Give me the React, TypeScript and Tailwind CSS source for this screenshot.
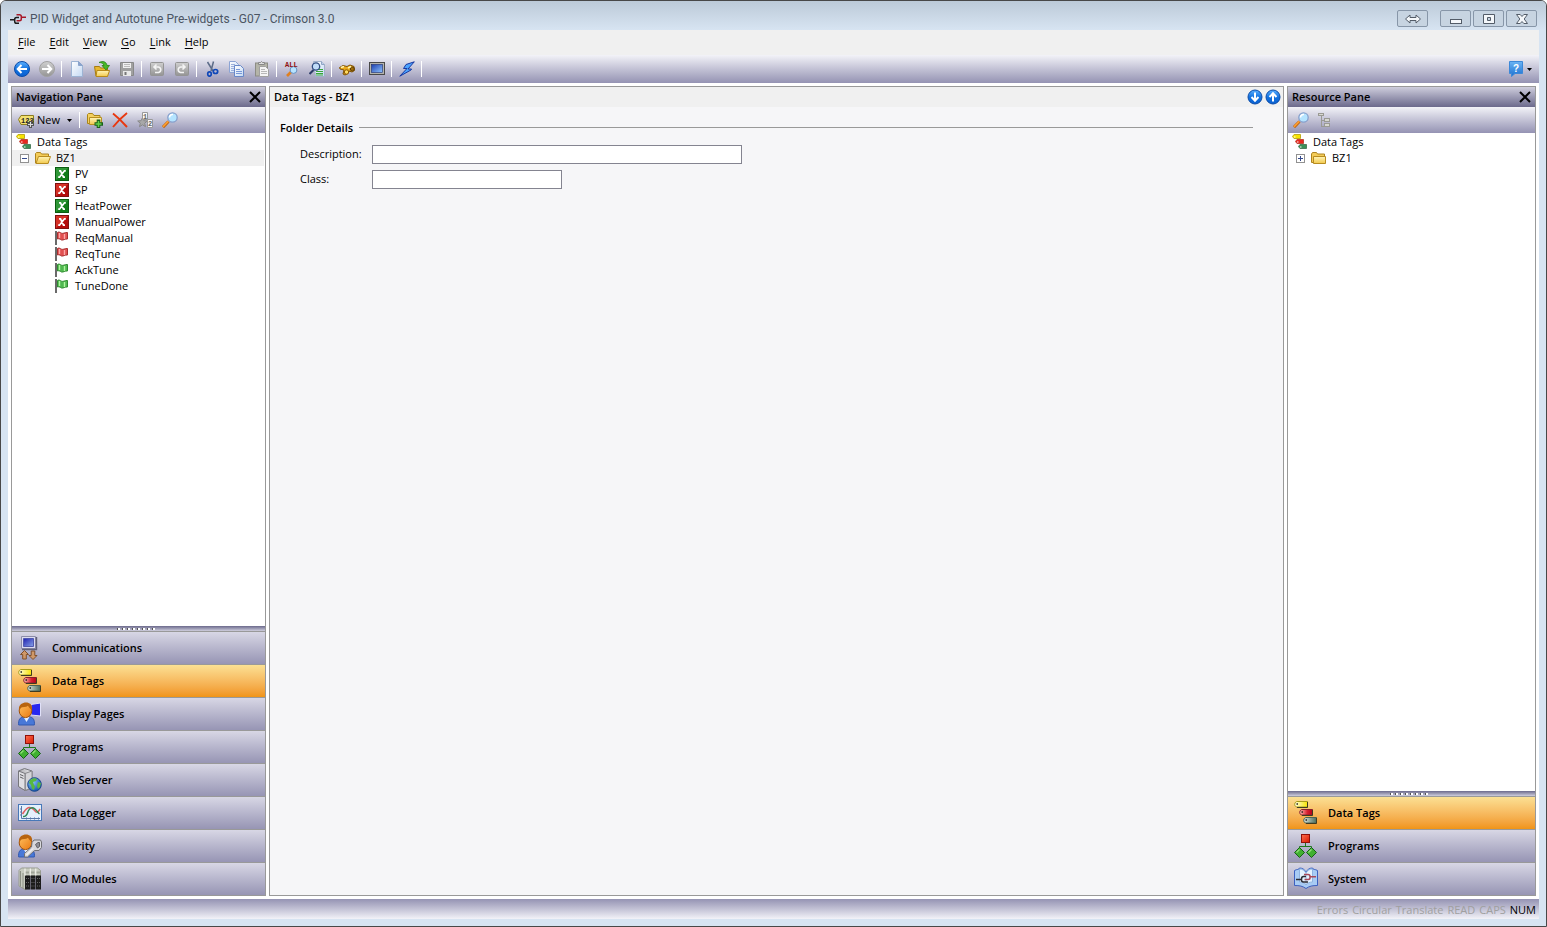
import React from "react";

type IconProps = { name: string; size?: number };

const SharedDefs = () => (
  <svg width="0" height="0" className="absolute" aria-hidden="true">
    <defs>
      <linearGradient id="gBlue" x1="0" y1="0" x2="0" y2="1">
        <stop offset="0" stopColor="#5cb0ff" />
        <stop offset="0.5" stopColor="#1272e0" />
        <stop offset="1" stopColor="#0a60d0" />
      </linearGradient>
      <linearGradient id="gHelp" x1="0" y1="0" x2="0" y2="1">
        <stop offset="0" stopColor="#6cb4f4" />
        <stop offset="1" stopColor="#1c70d0" />
      </linearGradient>
      <linearGradient id="gGray" x1="0" y1="0" x2="0" y2="1">
        <stop offset="0" stopColor="#d0d0d0" />
        <stop offset="1" stopColor="#949494" />
      </linearGradient>
      <linearGradient id="gFolder" x1="0" y1="0" x2="0" y2="1">
        <stop offset="0" stopColor="#fff4b8" />
        <stop offset="1" stopColor="#f2c94c" />
      </linearGradient>
      <linearGradient id="gPage" x1="0" y1="0" x2="1" y2="1">
        <stop offset="0" stopColor="#ffffff" />
        <stop offset="1" stopColor="#c3d9f3" />
      </linearGradient>
      <linearGradient id="gScreen" x1="0" y1="0" x2="1" y2="1">
        <stop offset="0" stopColor="#1c3fae" />
        <stop offset="1" stopColor="#8fc4ff" />
      </linearGradient>
      <linearGradient id="gMonitor" x1="0" y1="0" x2="1" y2="1">
        <stop offset="0" stopColor="#2020b0" />
        <stop offset="1" stopColor="#88a4e8" />
      </linearGradient>
      <linearGradient id="gYellowTag" x1="0" y1="0" x2="1" y2="0">
        <stop offset="0" stopColor="#fffde0" />
        <stop offset="1" stopColor="#f8e400" />
      </linearGradient>
      <linearGradient id="gRedTag" x1="0" y1="0" x2="1" y2="0">
        <stop offset="0" stopColor="#ffc0b4" />
        <stop offset="0.6" stopColor="#d82030" />
        <stop offset="1" stopColor="#b00018" />
      </linearGradient>
      <linearGradient id="gGreenTag" x1="0" y1="0" x2="1" y2="0">
        <stop offset="0" stopColor="#d8e4dc" />
        <stop offset="1" stopColor="#4c6c58" />
      </linearGradient>
      <linearGradient id="gRedSquare" x1="0" y1="0" x2="1" y2="1">
        <stop offset="0" stopColor="#ff7050" />
        <stop offset="1" stopColor="#d81800" />
      </linearGradient>
      <linearGradient id="gTower" x1="0" y1="0" x2="1" y2="0">
        <stop offset="0" stopColor="#a8a8ac" />
        <stop offset="1" stopColor="#ececf0" />
      </linearGradient>
      <linearGradient id="gSkin" x1="0" y1="0" x2="1" y2="1">
        <stop offset="0" stopColor="#ffc060" />
        <stop offset="1" stopColor="#e87810" />
      </linearGradient>
      <radialGradient id="gGlobe" cx="0.35" cy="0.3" r="0.8">
        <stop offset="0" stopColor="#8cc8ff" />
        <stop offset="1" stopColor="#0848a8" />
      </radialGradient>
    </defs>
  </svg>
);

const lens = (
  <>
    <path d="M1 15.200 6.500 9.500" stroke="#c06818" strokeWidth="3" />
    <path d="M1 14.800 6.300 9.300" stroke="#ffa030" strokeWidth="1.600" />
    <circle cx="10.500" cy="5.500" r="4.700" fill="#b4e4ff" stroke="#88a0cc" strokeWidth="1.300" />
    <path d="M7.500 5.500A3 3 0 0 1 11 2.500" stroke="#fff" strokeWidth="1.600" fill="none" />
  </>
);

const user = (
  <>
    <path d="M.7 23c-.7-5 1.500-8 4.800-8h6c3.500 0 5.500 3 4.800 8z" fill="#4878d8" stroke="#3058b0" />
    <path d="M5.500 15l3 5 3-5z" fill="#e8f0ff" />
    <ellipse cx="7.500" cy="8.800" rx="6.300" ry="6.800" fill="url(#gSkin)" stroke="#a05008" />
    <path d="M1.200 9C-.2 3.500 4 .6 8 .6c4.500 0 7 3.400 5.800 7.400C12 7 11 5.500 10 3.800 8 5.500 4.500 5 3 5.800 2.200 6.500 2 8 1.200 9z" fill="#b86410" />
  </>
);

const xTag = (light: string, fill: string, border: string) => (
  <>
    <rect x="1.500" y="1.500" width="13" height="13" fill={fill} stroke={border} />
    <path d="M2 2h12L2 14z" fill={light} opacity=".45" />
    <path d="M5 4.800h1.500l3 6.400H11M11.800 4.800h-1.300L5.500 11.200H4.200" stroke="#fff" strokeWidth="1.700" fill="none" />
  </>
);

const flag = (fill: string, light: string, edge: string) => (
  <>
    <path d="M2 1v14" stroke="#444" strokeWidth="1.600" />
    <path d="M3.500 2.500C5 1.500 6 2.500 7.500 3.200c2 .8 3-1 6-.7v6.500c-3-.3-4 1.500-6 1C6 9.300 5 8.300 3.500 9z" fill={fill} stroke={edge} />
    <path d="M5.500 3v5M10.500 4v5" stroke={light} strokeWidth="1.400" />
  </>
);

const icons16: Record<string, React.ReactNode> = {
  app: (
    <g fill="none" strokeWidth="1.500">
      <path d="M0 8.700h4.500M9 6.500H6.500Q4.700 6.500 4.700 8.500v2q0 1.800 1.800 1.800H9" stroke="#1c1c1c" />
      <path d="M6.500 3.800h3q1.800 0 1.800 1.800v2.600q0 1.500-1.800 1.500H6.500M11.300 6.300H16" stroke="#a81828" />
    </g>
  ),
  back: (
    <>
      <circle cx="8" cy="8" r="7.500" fill="url(#gBlue)" stroke="#0c4ca8" />
      <path d="M13 8H4M7.500 4 3.700 8l3.800 4" stroke="#fff" strokeWidth="2" fill="none" />
    </>
  ),
  forward: (
    <>
      <circle cx="8" cy="8" r="7.500" fill="url(#gGray)" stroke="#a0a0a0" />
      <path d="M3 8h9M8.500 4l3.800 4-3.800 4" stroke="#fff" strokeWidth="2" fill="none" />
    </>
  ),
  down: (
    <>
      <circle cx="8" cy="8" r="7" fill="url(#gBlue)" stroke="#0c4ca8" />
      <path d="M8 3.500v8M4.500 8 8 11.700 11.500 8" stroke="#fff" strokeWidth="2" fill="none" />
    </>
  ),
  up: (
    <>
      <circle cx="8" cy="8" r="7" fill="url(#gBlue)" stroke="#0c4ca8" />
      <path d="M8 12.500v-8M4.500 8 8 4.300 11.500 8" stroke="#fff" strokeWidth="2" fill="none" />
    </>
  ),
  newFile: (
    <>
      <path d="M2.500.5h7l4 4v11h-11z" fill="url(#gPage)" stroke="#9db4d4" />
      <path d="M9.500.5v4h4z" fill="#8aa4cc" stroke="#8aa4cc" />
    </>
  ),
  open: (
    <>
      <path d="M.5 5.500h5l1 1.500h7v8H2z" fill="#e8b830" stroke="#a87c10" />
      <path d="M3 9.500h12.500l-2 6H2z" fill="url(#gFolder)" stroke="#b88a18" />
      <path d="M5 1.500C8.500-.5 12.500.5 13 4.500h2.500L12 9 8 4.500h2C9.500 2.500 7.500 1.500 5 1.500z" fill="#48b828" stroke="#1c7c10" strokeWidth="0.700" />
    </>
  ),
  save: (
    <>
      <path d="M1.500 1.500h13v13h-13z" fill="#a0a0a0" stroke="#888" />
      <path d="M4 2h8v5H4z" fill="#f0f0f0" />
      <path d="M4 10h8v5H4z" fill="#e8e8e8" />
      <path d="M5.500 11h2v3h-2z" fill="#777" />
      <path d="M5 3.500h6M5 5.500h6" stroke="#bbb" />
    </>
  ),
  undo: (
    <>
      <rect x="1.500" y="1.500" width="13" height="13" rx="1" fill="url(#gGray)" stroke="#959595" />
      <path d="M5 6h4.500a2.800 2.800 0 0 1 0 5.500H6M7.500 3.500 5 6l2.500 2.500" stroke="#f4f4f4" strokeWidth="1.600" fill="none" />
    </>
  ),
  redo: (
    <>
      <rect x="1.500" y="1.500" width="13" height="13" rx="1" fill="url(#gGray)" stroke="#959595" />
      <path d="M11 6H6.500a2.800 2.800 0 0 0 0 5.500H10M8.500 3.500 11 6 8.500 8.500" stroke="#f4f4f4" strokeWidth="1.600" fill="none" />
    </>
  ),
  cut: (
    <>
      <path d="M3.500 1 9 10M9.500.5 7 10" stroke="#5c6c88" strokeWidth="1.500" />
      <g fill="none" stroke="#1048b8" strokeWidth="1.700">
        <ellipse cx="5.500" cy="13" rx="1.800" ry="2.200" />
        <ellipse cx="11.500" cy="10.500" rx="2.200" ry="2" />
      </g>
    </>
  ),
  copy: (
    <>
      <path d="M.5.5h6l3 3v8h-9z" fill="url(#gPage)" stroke="#8ca4d4" />
      <path d="M2 3.500h4M2 5.500h4M2 7.500h3M2 9.500h3" stroke="#9cb0dc" />
      <path d="M5.500 4.500h6l3 3v8h-9z" fill="url(#gPage)" stroke="#6888c8" />
      <path d="M7 8.500h4M7 10.500h6M7 12.500h6" stroke="#7898d8" />
    </>
  ),
  paste: (
    <>
      <rect x="1.500" y="2" width="12" height="13" fill="#b4b4a8" stroke="#8c8c84" />
      <path d="M4.500 3.500v-2h2l1-1 1 1h2v2z" fill="#ddd" stroke="#888" />
      <path d="M5.500 5.500h6l3 3v7h-9z" fill="#f4f4f4" stroke="#a0a0a0" />
      <path d="M7 8.500h4M7 10.500h6M7 12.500h6" stroke="#b8b8b8" />
    </>
  ),
  findAll: (
    <>
      <path d="m3 15 4-4" stroke="#e08020" strokeWidth="2.600" />
      <circle cx="9.500" cy="9" r="3.400" fill="#b8e4ff" stroke="#6890c0" />
      <text x="1" y="6" fontSize="7" fontWeight="700" fill="#901010" fontFamily="Liberation Mono, monospace">ALL</text>
    </>
  ),
  findPage: (
    <>
      <path d="M4.500.5h8l3 3v12h-9z" fill="url(#gPage)" stroke="#a0b0c8" />
      <path d="M12.500.5v3h3" fill="#c0d0e8" stroke="#90a4c4" />
      <path d="M9 8.500h5M7 10.500h7M7 12.500h7M7 14h7" stroke="#38a838" />
      <path d="m.5 13 4-4" stroke="#2c3c68" strokeWidth="2.200" />
      <circle cx="7" cy="5.500" r="3.700" fill="#c0dcf8" stroke="#304c80" strokeWidth="1.300" />
    </>
  ),
  binoculars: (
    <>
      <path d="M.5 6.500 4 4.500l4 1 3-1.500 4 1.500.5 4-2.500 1.500-3-1-1 2.500-3 1.500-2-1L5 9 1 8z" fill="#e8a818" stroke="#80540a" />
      <circle cx="7.500" cy="11" r="2.200" fill="#ffdc60" stroke="#8c5808" />
      <circle cx="13.300" cy="8" r="2" fill="#a06c08" stroke="#5c3c04" />
      <path d="M2 6.500 5 5.500M9 7l3-1.500" stroke="#fff4b0" strokeWidth="1.400" />
    </>
  ),
  screen: (
    <>
      <rect x=".5" y="1.500" width="15" height="12" fill="#b4b4ac" stroke="#484848" />
      <rect x="2.500" y="3.500" width="11" height="8" fill="url(#gScreen)" stroke="#1c2c70" strokeWidth=".6" />
    </>
  ),
  bolt: <path d="M15.300.8 7 3.500 4.500 7.500H8L.8 15.200 12 9 12.500 8H9z" fill="#4ca4ff" stroke="#1838a0" />,
  help: (
    <>
      <path d="M1.500.5h13v12H7l-3.500 3v-3h-2z" fill="url(#gHelp)" stroke="#3c88d8" />
      <text x="5" y="11" fontSize="10" fontWeight="700" fill="#fff" fontFamily="Liberation Sans, sans-serif">?</text>
    </>
  ),
  newTag: (
    <>
      <path d="M.5 7.500 3 3.500h12.500v9H3z" fill="#f2e070" stroke="#8c7c20" />
      <text x="3" y="10.500" fontSize="7" fontWeight="700" fill="#222" fontFamily="Liberation Mono, monospace">123</text>
      <path d="M12.500 9v7M9 12.500h7" stroke="#555" strokeWidth="3" />
      <path d="M12.500 10v5M10 12.500h5" stroke="#ddd" />
    </>
  ),
  newFolder: (
    <>
      <path d="M.5 11.500v-9l1-1h4l1.500 2h6v8z" fill="#f4d060" stroke="#a88418" />
      <path d="M2.500 5.500h12v7h-12z" fill="url(#gFolder)" stroke="#b89020" />
      <path d="M11.500 7.500v8.500M7.500 12h8.500" stroke="#186018" strokeWidth="3.600" />
      <path d="M11.500 9v6M8.500 12h6" stroke="#60d048" strokeWidth="1.600" />
    </>
  ),
  remove: <path d="M1 1.500c5 4 10 9 14 13.500M15 1C10 5 5 10 1 15" stroke="#e83810" strokeWidth="1.900" fill="none" />,
  sort: (
    <>
      <path d="m5.500 5.500 1.400 3.200 3.400.3-2.600 2.200.8 3.500-3-1.900-3 1.900.8-3.500L.7 9l3.400-.3z" fill="#a8a8a8" stroke="#888" />
      <path d="M5.500.5h5v7h-5zM10.500 7.500h5v8h-5z" fill="#f8f8f8" stroke="#999" />
      <g fontSize="7" fontWeight="700" fill="#666" fontFamily="Liberation Mono, monospace">
        <text x="6" y="6.500">1</text>
        <text x="11" y="14">2</text>
      </g>
    </>
  ),
  find: lens,
  hierarchy: (
    <g fill="#d8d8d0" stroke="#9a9a94" shapeRendering="crispEdges">
      <path d="M3.500 4v10H7M3.500 8.500H7" fill="none" />
      <rect x=".5" y="1.500" width="5" height="2" />
      <rect x="6.500" y="6.500" width="5" height="3" />
      <rect x="6.500" y="11.500" width="5" height="3" />
    </g>
  ),
  tags: (
    <>
      <path d="M.5 2.500 2 .5h6.500v4H2z" fill="#f8e400" stroke="#c0ac20" />
      <path d="M3.500 7.500 5 5.500h6.500v4H5z" fill="#e82820" stroke="#c04838" />
      <path d="M6.500 12.500 8 10.500h6.500v4H8z" fill="#3c9058" stroke="#508060" />
      <path d="M2 3h1.500M5 8h1.500M8 13h1.500" stroke="#fff" />
    </>
  ),
  folder: (
    <>
      <path d="M.5 12.500V4l1-1.500h4l1 1.500h7v8.500z" fill="#f4cc58" stroke="#ae8420" />
      <path d="M2.500 6.500h12v7h-12z" fill="url(#gFolder)" stroke="#b88c20" />
    </>
  ),
  folderOpen: (
    <>
      <path d="M.5 13V3.500l1-1h4l1 1.500h7v9z" fill="#f4cc58" stroke="#ae8420" />
      <path d="M3.500 6.500h12l-2.500 7H1z" fill="url(#gFolder)" stroke="#b88c20" />
    </>
  ),
  xGreen: xTag("#58b860", "#107c18", "#0a5c10"),
  xRed: xTag("#ff6048", "#b40c0c", "#801010"),
  flagRed: flag("#e05050", "#ffa8a8", "#a83030"),
  flagGreen: flag("#50b850", "#b0f8a0", "#308c30"),
};

const icons24: Record<string, React.ReactNode> = {
  communications: (
    <>
      <path d="M3.500.5h14v12h-14z" fill="#dcdcf0" stroke="#8c8ca8" />
      <path d="M5.500 2.500h10v8h-10z" fill="url(#gMonitor)" stroke="#5058b0" />
      <path d="M18.500 1v12.500H4" stroke="#606078" strokeWidth="1.400" fill="none" />
      <path d="m6.500 14.500 4 4H8.300v4.500H4.700v-4.500H2.500zM15 23.500l-4-4h2.200V15h3.600v4.500H19z" fill="#d09868" stroke="#80502c" />
    </>
  ),
  dataTags: (
    <>
      <path d="M.7 3.200C1 1.500 2 .5 3 .5h10.500V6H3C1.800 6 .7 5 .7 3.200z" fill="url(#gYellowTag)" stroke="#a89c18" />
      <path d="M5.700 11.200c.3-1.700 1.300-2.700 2.300-2.700h10.500V14H8c-1.200 0-2.300-1-2.300-2.800z" fill="url(#gRedTag)" stroke="#88202c" />
      <path d="M9.700 19.200c.3-1.700 1.300-2.700 2.300-2.700h10.500V22H12c-1.200 0-2.300-1-2.300-2.800z" fill="url(#gGreenTag)" stroke="#4c6454" />
      <path d="M13.500 1v5.500H3M18.500 9v5.500H8M22.500 17v5.500H12" stroke="#403c20" fill="none" />
      <path d="M2.500 3h1.500M7.500 11h1.500M11.500 19h1.500" stroke="#222" strokeWidth="1.400" />
    </>
  ),
  displayPages: (
    <>
      <path d="m13 2.500 9.500-1.500v13L13 13z" fill="#2828f0" stroke="#e0e0f8" />
      {user}
    </>
  ),
  programs: (
    <>
      <path d="M11.500 9v3.500M5.500 15v-2.500h12V15" stroke="#207820" fill="none" />
      <rect x="7.500" y=".5" width="8" height="8" fill="url(#gRedSquare)" stroke="#901008" />
      <path d="m5.500 13.500 5 5-5 5-5-5zM17.500 13.500l5 5-5 5-5-5z" fill="#40b030" stroke="#186018" />
      <path d="m2.500 18.500 3-3M14.500 18.500l3-3" stroke="#90e078" strokeWidth="1.300" />
    </>
  ),
  webServer: (
    <>
      <path d="M.5 3 6.500.5l7.500 2.500v17L7.500 22.500.5 18.500z" fill="url(#gTower)" stroke="#77777c" />
      <path d="M7 5.500 14 3v17l-7 2.500z" fill="#d4d4d8" stroke="#88888c" />
      <path d="M.5 3 7 5.500v17L.5 18.500z" fill="#e0e0e4" stroke="#77777c" />
      <path d="m2 6.500 3.500 1.500M2 9l3.500 1.500" stroke="#606064" />
      <circle cx="16.500" cy="16.500" r="6.800" fill="url(#gGlobe)" stroke="#184888" />
      <path d="m12 12 4-2 3 1-1 2-3 1 1 3 1 1-1 4-2-1-1-4-2-2zM20 14l3 1-1 4-2 2-1-3z" fill="#58b840" />
    </>
  ),
  dataLogger: (
    <>
      <rect x=".5" y="3.500" width="23" height="16" fill="#e4f0fc" stroke="#4878b8" />
      <path d="M3.500 5v12.500H22M2 8h2M2 11h2M2 14h2M8.500 16.500v2M12.500 16.500v2M16.500 16.500v2M20.500 16.500v2" stroke="#5878a8" fill="none" />
      <path d="M4.500 13C7 9.500 8 7 11 6.500c4-.500 5 2.500 7 4.500 1.500 1 2.500-.5 4-3" stroke="#e06060" strokeWidth="1.500" fill="none" />
      <path d="M5 15.500c4 .5 4-3 5.500-6S14.500 6 17 8s3 4 4.500 5" stroke="#308858" strokeWidth="1.500" fill="none" />
    </>
  ),
  security: (
    <>
      {user}
      <path d="M14 8.500 16 6h6.500l1 2v5.500l-2.500 3h-4.500l-7 6.500H6.500v-3.500L13.500 13z" fill="#d8d8dc" stroke="#707074" />
      <path d="m17.500 10.500 2.500-2h1.500v4l-2 1.500z" fill="#909098" stroke="#606064" />
      <path d="m8.500 21 6.500-6.500" stroke="#fff" />
    </>
  ),
  ioModules: (
    <>
      <path d="M1 3.500 3.500 1h16l3 2.500V9H8v14l-7-4z" fill="#c8ccc0" stroke="#989c90" />
      <path d="M2.500 4v15.500M5 6v15.500" stroke="#8c9084" />
      <path d="M7 8.500h5v14H7zM12.500 8.500h5v14h-5zM18 8.500h5v14h-5z" fill="#1c1c1c" />
      <path d="M7 5.500h4M12.500 5.500h4M18 5.500h4" stroke="#a0a498" strokeWidth="2" />
      <path d="M8 11.500h3M13.500 11.500h3M19 11.500h3M8 15.500h3M13.500 15.500h3M19 15.500h3M8 19h3M13.500 19h3M19 19h3" stroke="#666" strokeDasharray="1 1" />
      <path d="M7 1.500v7M12.300 1.500v7M17.800 1.500v7" stroke="#fafaf4" />
    </>
  ),
  system: (
    <>
      <path d="M.5 3.500C3 2 5 3 5.500 1c3 0 5 1.500 6.500 4 1.500-2.500 3.500-4 6.500-4 .5 2 2.500 1 5 2.500v15c-5 0-8 .5-11.500 3-3.500-2.500-6.500-3-11.500-3z" fill="#a8ccf4" stroke="#3c60c0" />
      <path d="M5.500 2c3 0 5 1.500 6.500 4 1.500-2.500 3.500-4 6.500-4v13c-3 0-5 1-6.500 3-1.500-2-3.500-3-6.500-3z" fill="#e4f2fe" stroke="#90b4e0" />
      <path d="M12 6v12" stroke="#90b4e0" />
      <path d="M2 12.500h5M12 9.500H9.500Q7.500 9.500 7.500 12v1q0 2 2 2H14" stroke="#2c2c34" strokeWidth="1.500" fill="none" />
      <path d="M10 7.500h4q2 0 2 2V11q0 1.500-2 1.500h-3.500M16 9.700h6" stroke="#a84858" strokeWidth="1.500" fill="none" />
    </>
  ),
};

const Icon = ({ name, size = 16 }: IconProps) => (
  <svg width={size} height={size} viewBox={`0 0 ${size} ${size}`} className="shrink-0" fill="none" aria-hidden="true">
    {size === 24 ? icons24[name] : icons16[name]}
  </svg>
);

const ToolButton = ({ name, label }: { name: string; label: string }) => (
  <button type="button" aria-label={label} className="flex h-6 w-[25px] items-center justify-center">
    <Icon name={name} />
  </button>
);

const Separator = () => (
  <span className="flex w-[5px] justify-center">
    <span className="h-4 w-px bg-white" />
  </span>
);

const Caret = () => (
  <svg width="5" height="3" viewBox="0 0 5 3" className="shrink-0" aria-hidden="true">
    <path d="M0 0h5L2.500 3z" fill="#000" />
  </svg>
);

const WindowButton = ({ label, children }: { label: string; children: React.ReactNode }) => (
  <button
    type="button"
    aria-label={label}
    className="flex h-[17px] w-[31px] items-center justify-center rounded-[2px] border border-[#8796a8] bg-[#c7d4e1]"
  >
    <svg width="16" height="12" viewBox="0 0 16 12" fill="#f4f7fa" stroke="#535c68" aria-hidden="true">
      {children}
    </svg>
  </button>
);

const menus = ["File", "Edit", "View", "Go", "Link", "Help"];

const tools: [string, string][][] = [
  [["back", "Back"], ["forward", "Forward"]],
  [["newFile", "New"], ["open", "Open"], ["save", "Save"]],
  [["undo", "Undo"], ["redo", "Redo"]],
  [["cut", "Cut"], ["copy", "Copy"], ["paste", "Paste"]],
  [["findAll", "Find all"], ["findPage", "Find in page"]],
  [["binoculars", "Search"]],
  [["screen", "Emulator"]],
  [["bolt", "Download"]],
];

const tags = [
  { label: "PV", icon: "xGreen" },
  { label: "SP", icon: "xRed" },
  { label: "HeatPower", icon: "xGreen" },
  { label: "ManualPower", icon: "xRed" },
  { label: "ReqManual", icon: "flagRed" },
  { label: "ReqTune", icon: "flagRed" },
  { label: "AckTune", icon: "flagGreen" },
  { label: "TuneDone", icon: "flagGreen" },
];

const navItems = [
  { label: "Communications", icon: "communications" },
  { label: "Data Tags", icon: "dataTags" },
  { label: "Display Pages", icon: "displayPages" },
  { label: "Programs", icon: "programs" },
  { label: "Web Server", icon: "webServer" },
  { label: "Data Logger", icon: "dataLogger" },
  { label: "Security", icon: "security" },
  { label: "I/O Modules", icon: "ioModules" },
];

const resourceItems = [
  { label: "Data Tags", icon: "dataTags" },
  { label: "Programs", icon: "programs" },
  { label: "System", icon: "system" },
];

const PaneHeader = ({ title }: { title: string }) => (
  <div className="flex h-5 items-center justify-between bg-linear-to-b from-[#cfcedd] to-[#6c6a8c] pr-1 pl-1">
    <h2 className="font-semibold">{title}</h2>
    <button type="button" aria-label={`Close ${title}`}>
      <svg width="12" height="12" viewBox="0 0 12 12" aria-hidden="true">
        <path d="M1 1l10 10M11 1 1 11" stroke="#000" strokeWidth="2" />
      </svg>
    </button>
  </div>
);

const Expander = ({ open }: { open: boolean }) => (
  <button type="button" aria-label={open ? "Collapse" : "Expand"} className="mr-px shrink-0">
    <svg width="9" height="9" viewBox="0 0 9 9" shapeRendering="crispEdges" aria-hidden="true">
      <rect x=".5" y=".5" width="8" height="8" fill="#fff" stroke="#919191" />
      <path d={open ? "M2 4.500h5" : "M2 4.500h5M4.500 2v5"} stroke="#34498c" />
    </svg>
  </button>
);

const CategoryList = ({ items }: { items: { label: string; icon: string }[] }) => (
  <div>
    <div className="flex h-[6px] justify-center gap-[2px] border-b border-[#999] bg-linear-to-b from-[#6c6a8c] to-[#cfcedd] pt-[2px] pr-[6px]">
      {Array.from({ length: 8 }, (_, i) => (
        <span key={i} className="h-[2px] w-[3px] border-l border-[#555] bg-white" />
      ))}
    </div>
    <nav className="divide-y divide-[#999]">
      {items.map((item) => (
        <button
          key={item.label}
          type="button"
          className={`flex h-[33px] w-full items-center gap-[10px] bg-linear-to-b pl-[6px] font-semibold last:h-8 ${
            item.label === "Data Tags" ? "from-[#fbe093] to-[#f09414]" : "from-[#d8d7e5] to-[#9795b4]"
          }`}
        >
          <Icon name={item.icon} size={24} />
          {item.label}
        </button>
      ))}
    </nav>
  </div>
);

export default function App() {
  return (
    <div className="flex h-screen flex-col overflow-hidden rounded-t-[6px] border border-[#484848] bg-[#d7e4f2] px-[7px] pb-[7px] font-['Open_Sans','Noto_Sans',sans-serif] text-[11px] leading-4 text-black">
      <SharedDefs />

      <header className="-mx-[7px] flex h-[29px] shrink-0 items-center justify-between bg-linear-to-b from-[#bccad8] to-[#d7e4f2] pt-[6px] pr-[9px] pl-[9px]">
        <div className="flex items-center gap-1 text-[#4b5563]">
          <Icon name="app" />
          <h1 className="font-['Roboto',sans-serif] text-[12px]">PID Widget and Autotune Pre-widgets - G07 - Crimson 3.0</h1>
        </div>
        <div className="flex gap-[2px]">
          <WindowButton label="Switch">
            <path d="M.5 6 5 2v2.500h6V2l4.500 4L11 10V7.500H5V10z" />
          </WindowButton>
          <span className="w-2" />
          <WindowButton label="Minimize">
            <rect x="2.500" y="6.500" width="11" height="4" />
          </WindowButton>
          <WindowButton label="Maximize">
            <path fillRule="evenodd" d="M2.500 1.500h11v9h-11zM6.500 4.500v3h3v-3z" />
          </WindowButton>
          <WindowButton label="Close">
            <path d="M2.500 1.500h3.700L8 3.500l1.800-2h3.700L10.200 6l3.300 4.500H9.800L8 8.500l-1.800 2H2.500L5.800 6z" />
          </WindowButton>
        </div>
      </header>

      <div className="flex h-[25px] shrink-0 items-center gap-[14px] bg-[#f0f0f0] pb-[2px] pl-[10px]">
        {menus.map((menu) => (
          <button key={menu} type="button">
            <u className="underline-offset-2">{menu[0]}</u>
            {menu.slice(1)}
          </button>
        ))}
      </div>

      <div className="flex h-7 shrink-0 items-center bg-linear-to-b from-[#f3f3f8] to-[#9593b3] pl-px">
        {tools.map((group, i) => (
          <React.Fragment key={i}>
            {group.map(([name, label]) => (
              <ToolButton key={name} name={name} label={label} />
            ))}
            <Separator />
          </React.Fragment>
        ))}
        <button type="button" aria-label="Help" className="mr-[7px] ml-auto flex items-center gap-[3px]">
          <Icon name="help" />
          <Caret />
        </button>
      </div>

      <div className="flex min-h-0 flex-1 gap-[3px] bg-white p-[3px]">
        <aside className="flex w-[255px] shrink-0 flex-col border border-[#999] bg-white">
          <PaneHeader title="Navigation Pane" />
          <div className="flex h-[26px] items-center bg-linear-to-b from-[#f3f3f8] to-[#9593b3] pl-[6px]">
            <button type="button" className="mr-[5px] flex items-center gap-[3px]">
              <Icon name="newTag" />
              <span className="mr-px w-[26px] text-left">New</span>
              <Caret />
            </button>
            <Separator />
            <ToolButton name="newFolder" label="New folder" />
            <ToolButton name="remove" label="Delete" />
            <ToolButton name="sort" label="Sort" />
            <ToolButton name="find" label="Find" />
          </div>
          <ul className="min-h-0 flex-1 pt-px">
            <li className="flex h-4 items-center gap-[5px] pl-1">
              <Icon name="tags" />
              Data Tags
            </li>
            <li className="mr-px flex h-4 items-center gap-[5px] bg-[#f0f0f0] pl-2">
              <Expander open />
              <Icon name="folderOpen" />
              BZ1
            </li>
            {tags.map((tag) => (
              <li key={tag.label} className="flex h-4 items-center gap-[5px] pl-[42px]">
                <Icon name={tag.icon} />
                {tag.label}
              </li>
            ))}
          </ul>
          <CategoryList items={navItems} />
        </aside>

        <main className="flex min-w-0 flex-1 flex-col border border-[#999] bg-[#f6f6f8]">
          <div className="flex h-5 items-center justify-between bg-[#f0f0f0] pr-[2px] pl-1">
            <h2 className="font-semibold">Data Tags - BZ1</h2>
            <div className="flex gap-[2px]">
              <button type="button" aria-label="Next item">
                <Icon name="down" />
              </button>
              <button type="button" aria-label="Previous item">
                <Icon name="up" />
              </button>
            </div>
          </div>
          <form className="pt-[13px] pr-[30px] pl-[10px]">
            <div className="flex items-center gap-[6px]">
              <h3 className="font-semibold">Folder Details</h3>
              <span className="mb-[2px] h-px flex-1 bg-[#999]" />
            </div>
            <div className="mt-[9px] flex flex-col gap-[6px] pl-5">
              <div className="flex items-center">
                <label htmlFor="description" className="w-[72px] pb-[2px]">
                  Description:
                </label>
                <input id="description" type="text" className="h-[19px] w-[370px] border border-[#848490] bg-white px-1" />
              </div>
              <div className="flex items-center">
                <label htmlFor="class" className="w-[72px] pb-[2px]">
                  Class:
                </label>
                <input id="class" type="text" className="h-[19px] w-[190px] border border-[#848490] bg-white px-1" />
              </div>
            </div>
          </form>
        </main>

        <aside className="flex w-[249px] shrink-0 flex-col border border-[#999] bg-white">
          <PaneHeader title="Resource Pane" />
          <div className="flex h-[26px] items-center bg-linear-to-b from-[#f3f3f8] to-[#9593b3]">
            <ToolButton name="find" label="Find" />
            <ToolButton name="hierarchy" label="Hierarchy" />
          </div>
          <ul className="min-h-0 flex-1 pt-px">
            <li className="flex h-4 items-center gap-[5px] pl-1">
              <Icon name="tags" />
              Data Tags
            </li>
            <li className="flex h-4 items-center gap-[5px] pl-2">
              <Expander open={false} />
              <Icon name="folder" />
              BZ1
            </li>
          </ul>
          <CategoryList items={resourceItems} />
        </aside>
      </div>

      <footer className="flex h-5 shrink-0 items-center justify-end gap-1 bg-linear-to-b from-[#9593b3] to-[#f3f3f8] pt-[2px] pr-[3px] text-[#a0a0a0]">
        <span>Errors</span>
        <span>Circular</span>
        <span>Translate</span>
        <span>READ</span>
        <span>CAPS</span>
        <span className="text-black">NUM</span>
      </footer>
    </div>
  );
}
